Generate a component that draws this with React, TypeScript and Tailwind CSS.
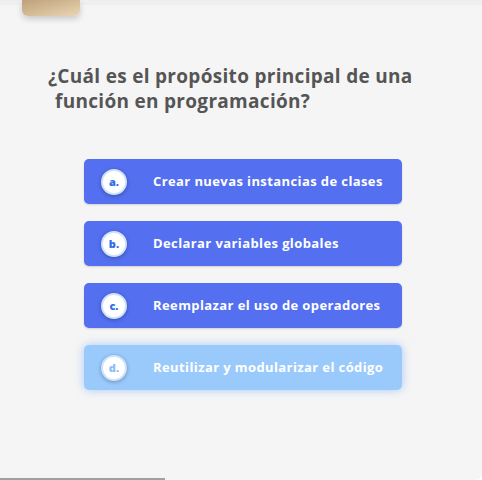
import React from 'react';

const options = [
  { key: 'a.', text: 'Crear nuevas instancias de clases' },
  { key: 'b.', text: 'Declarar variables globales' },
  { key: 'c.', text: 'Reemplazar el uso de operadores' },
  { key: 'd.', text: 'Reutilizar y modularizar el código', selected: true },
];

export default function App() {
  return (
    <div className="relative h-[480px] w-[482px] overflow-hidden rounded-br-[6px] bg-[#f5f5f5] font-['Open_Sans',sans-serif]">
      <div className="h-[5px] w-full bg-[#efefef]" />
      <div className="absolute left-[22px] top-0 h-[16px] w-[58px] rounded-b-[6px] bg-gradient-to-br from-[#bda27b] to-[#ead5b3] shadow-[0_3px_6px_rgba(0,0,0,0.18)]" />

      <h1 className="mt-[59px] pl-[48px] text-[19px] font-bold leading-[25px] tracking-[0.3px] text-[#555555]">
        ¿Cuál es el propósito principal de una
        <br />
        <span className="pl-[7px]">función en programación?</span>
      </h1>

      <div className="ml-[84px] mt-[45px] flex w-[318px] flex-col gap-[17px]">
        {options.map((o) => (
          <div
            key={o.key}
            className={
              o.selected
                ? 'flex h-[45px] items-center rounded-[5px] bg-[#9acafc] shadow-[0_0_10px_rgba(120,170,250,0.6)]'
                : 'flex h-[45px] items-center rounded-[5px] bg-[#5470f0] shadow-[0_1px_2px_rgba(0,0,0,0.15)]'
            }
          >
            <div className="ml-[17px] flex h-[26px] w-[26px] items-center justify-center rounded-full border-[2px] border-[#cfe2ff] bg-white shadow-[0_1px_4px_rgba(0,0,0,0.3)]">
              <span
                className={
                  o.selected
                    ? 'text-[11px] font-extrabold leading-none text-[#8cbcf5]'
                    : 'text-[11px] font-extrabold leading-none text-[#2f6fe8]'
                }
              >
                {o.key}
              </span>
            </div>
            <span className="ml-[26px] text-[13px] font-bold tracking-[0.4px] text-white">{o.text}</span>
          </div>
        ))}
      </div>

      <div className="absolute bottom-0 left-0 h-[2px] w-[165px] bg-[#a0a0a0]" />
    </div>
  );
}
